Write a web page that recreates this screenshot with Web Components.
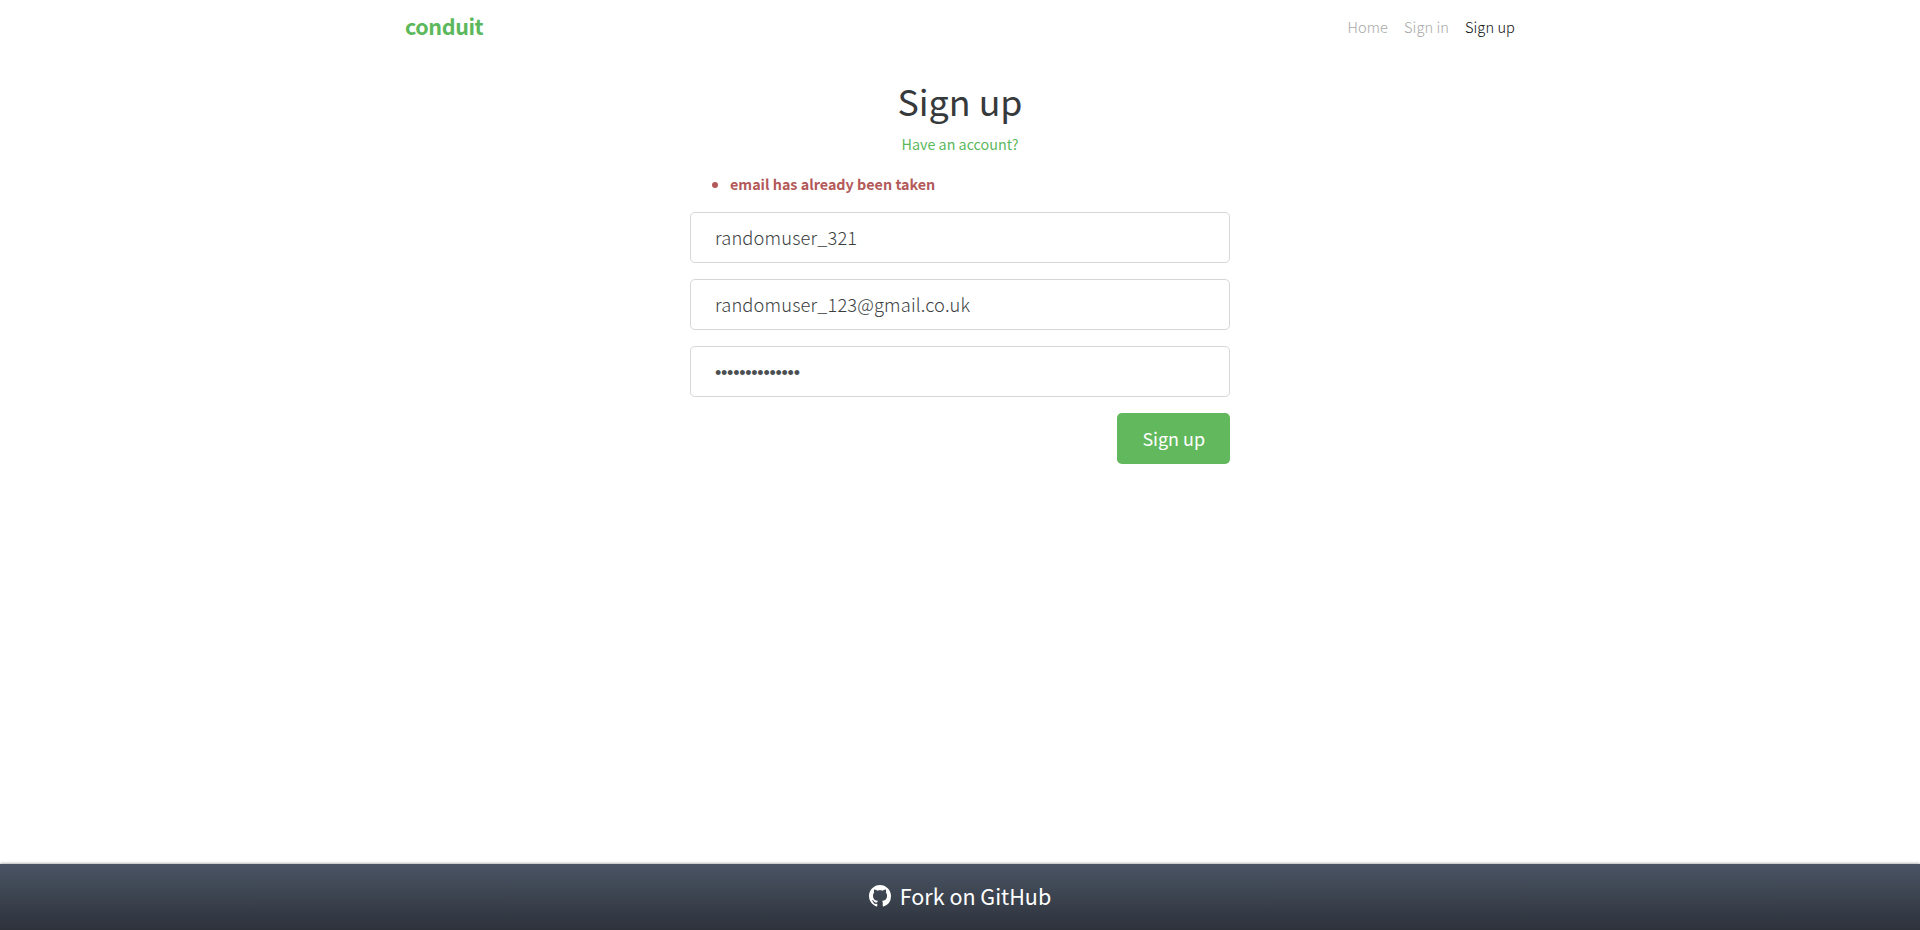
<!DOCTYPE html>
<html lang="en"><head><meta charset="utf-8"><title>Conduit</title>
<style>
html,body{height:100%}
body{margin:0;background:#fff;font-family:"Noto Sans CJK SC","Noto Sans CJK JP","Open Sans",sans-serif;color:#373a3c}
</style></head><body>
<conduit-app></conduit-app>
<script>
const define=(name,html)=>customElements.define(name,class extends HTMLElement{
  constructor(){super();this.attachShadow({mode:'open'}).innerHTML=html}
});
define('nav-bar',`<style>
:host{display:flex;justify-content:space-between;align-items:center;box-sizing:border-box;width:1110px;height:54px;margin:0 auto}
.brand{font-size:21.5px;line-height:30px;padding-bottom:2px;letter-spacing:-.4px;font-weight:700;color:#5cb85c;text-decoration:none}
nav{display:flex;gap:16px;font-size:14.6px;line-height:24px;font-weight:300;letter-spacing:.08px}
a{color:#a8a8a8;text-decoration:none}
a.active{color:#0c0c0c}
</style><a class="brand" href="#">conduit</a><nav><a href="#">Home</a><a href="#">Sign in</a><a class="active" href="#">Sign up</a></nav>`);
define('text-field',`<style>
:host{display:flex;align-items:center;box-sizing:border-box;height:51px;padding:0 24px 2px;border:1px solid #d4d6d8;border-radius:4.8px;background:#fff;font-size:18.3px;line-height:30px;font-weight:300;letter-spacing:.14px;color:#3c3f42}
:host([type=password]){font-family:"Liberation Sans",sans-serif;font-size:18px;letter-spacing:-.25px;padding-top:3px;padding-bottom:0;color:#4d5053}
</style><slot></slot>`);
define('error-list',`<style>
:host{display:block}
ul{margin:0;padding-left:40px;color:#b3595a;font-weight:700;font-size:14.33px;line-height:24px}
</style><ul><li><slot></slot></li></ul>`);
define('sign-up-form',`<style>
:host{display:flex;flex-direction:column;box-sizing:border-box;width:540px;margin:24px auto 0}
h1{margin:0;text-align:center;font-size:35.8px;line-height:44px;font-weight:400}
.alt{align-self:center;margin-top:10px;color:#5cb85c;text-decoration:none;font-size:14.33px;line-height:24px;font-weight:400}
error-list{margin-top:16px}
.fields{display:flex;flex-direction:column;gap:16px;margin-top:16px}
button{align-self:flex-end;margin-top:16px;height:51px;padding:0 25px 2px;border:0;border-radius:4.8px;background:#62b85d;color:#fff;font:400 17.91px/30px "Noto Sans CJK SC",sans-serif}
</style><h1>Sign up</h1><a class="alt" href="#">Have an account?</a><error-list>email has already been taken</error-list>
<div class="fields"><text-field>randomuser_321</text-field><text-field>randomuser_123@gmail.co.uk</text-field><text-field type="password">••••••••••••••</text-field></div>
<button>Sign up</button>`);
define('fork-banner',`<style>
:host{display:flex;justify-content:center;align-items:center;gap:9px;box-sizing:border-box;height:66px;padding-bottom:2px;background:linear-gradient(#4a5464,#2d323b);color:#fff;font-size:21.5px;line-height:36px;font-weight:400;box-shadow:0 0 3px rgba(0,0,0,.5)}
svg{display:block;width:22px;height:22px;fill:#fff}
</style><svg viewBox="0 0 16 16"><path d="M8 0C3.58 0 0 3.58 0 8c0 3.54 2.29 6.53 5.47 7.59.4.07.55-.17.55-.38 0-.19-.01-.82-.01-1.49-2.01.37-2.53-.49-2.69-.94-.09-.23-.48-.94-.82-1.13-.28-.15-.68-.52-.01-.53.63-.01 1.08.58 1.23.82.72 1.21 1.87.87 2.33.66.07-.52.28-.87.51-1.07-1.78-.2-3.64-.89-3.64-3.95 0-.87.31-1.59.82-2.15-.08-.2-.36-1.02.08-2.12 0 0 .67-.21 2.2.82.64-.18 1.32-.27 2-.27s1.36.09 2 .27c1.53-1.04 2.2-.82 2.2-.82.44 1.1.16 1.92.08 2.12.51.56.82 1.27.82 2.15 0 3.07-1.87 3.75-3.65 3.95.29.25.54.73.54 1.48 0 1.07-.01 1.93-.01 2.2 0 .21.15.46.55.38A8.01 8.01 0 0 0 16 8c0-4.42-3.58-8-8-8z"/></svg><span>Fork on GitHub</span>`);
define('conduit-app',`<style>
:host{display:flex;flex-direction:column;height:100vh;overflow:hidden}
fork-banner{margin-top:auto;flex:none}
</style><nav-bar></nav-bar><sign-up-form></sign-up-form><fork-banner></fork-banner>`);
</script></body></html>
